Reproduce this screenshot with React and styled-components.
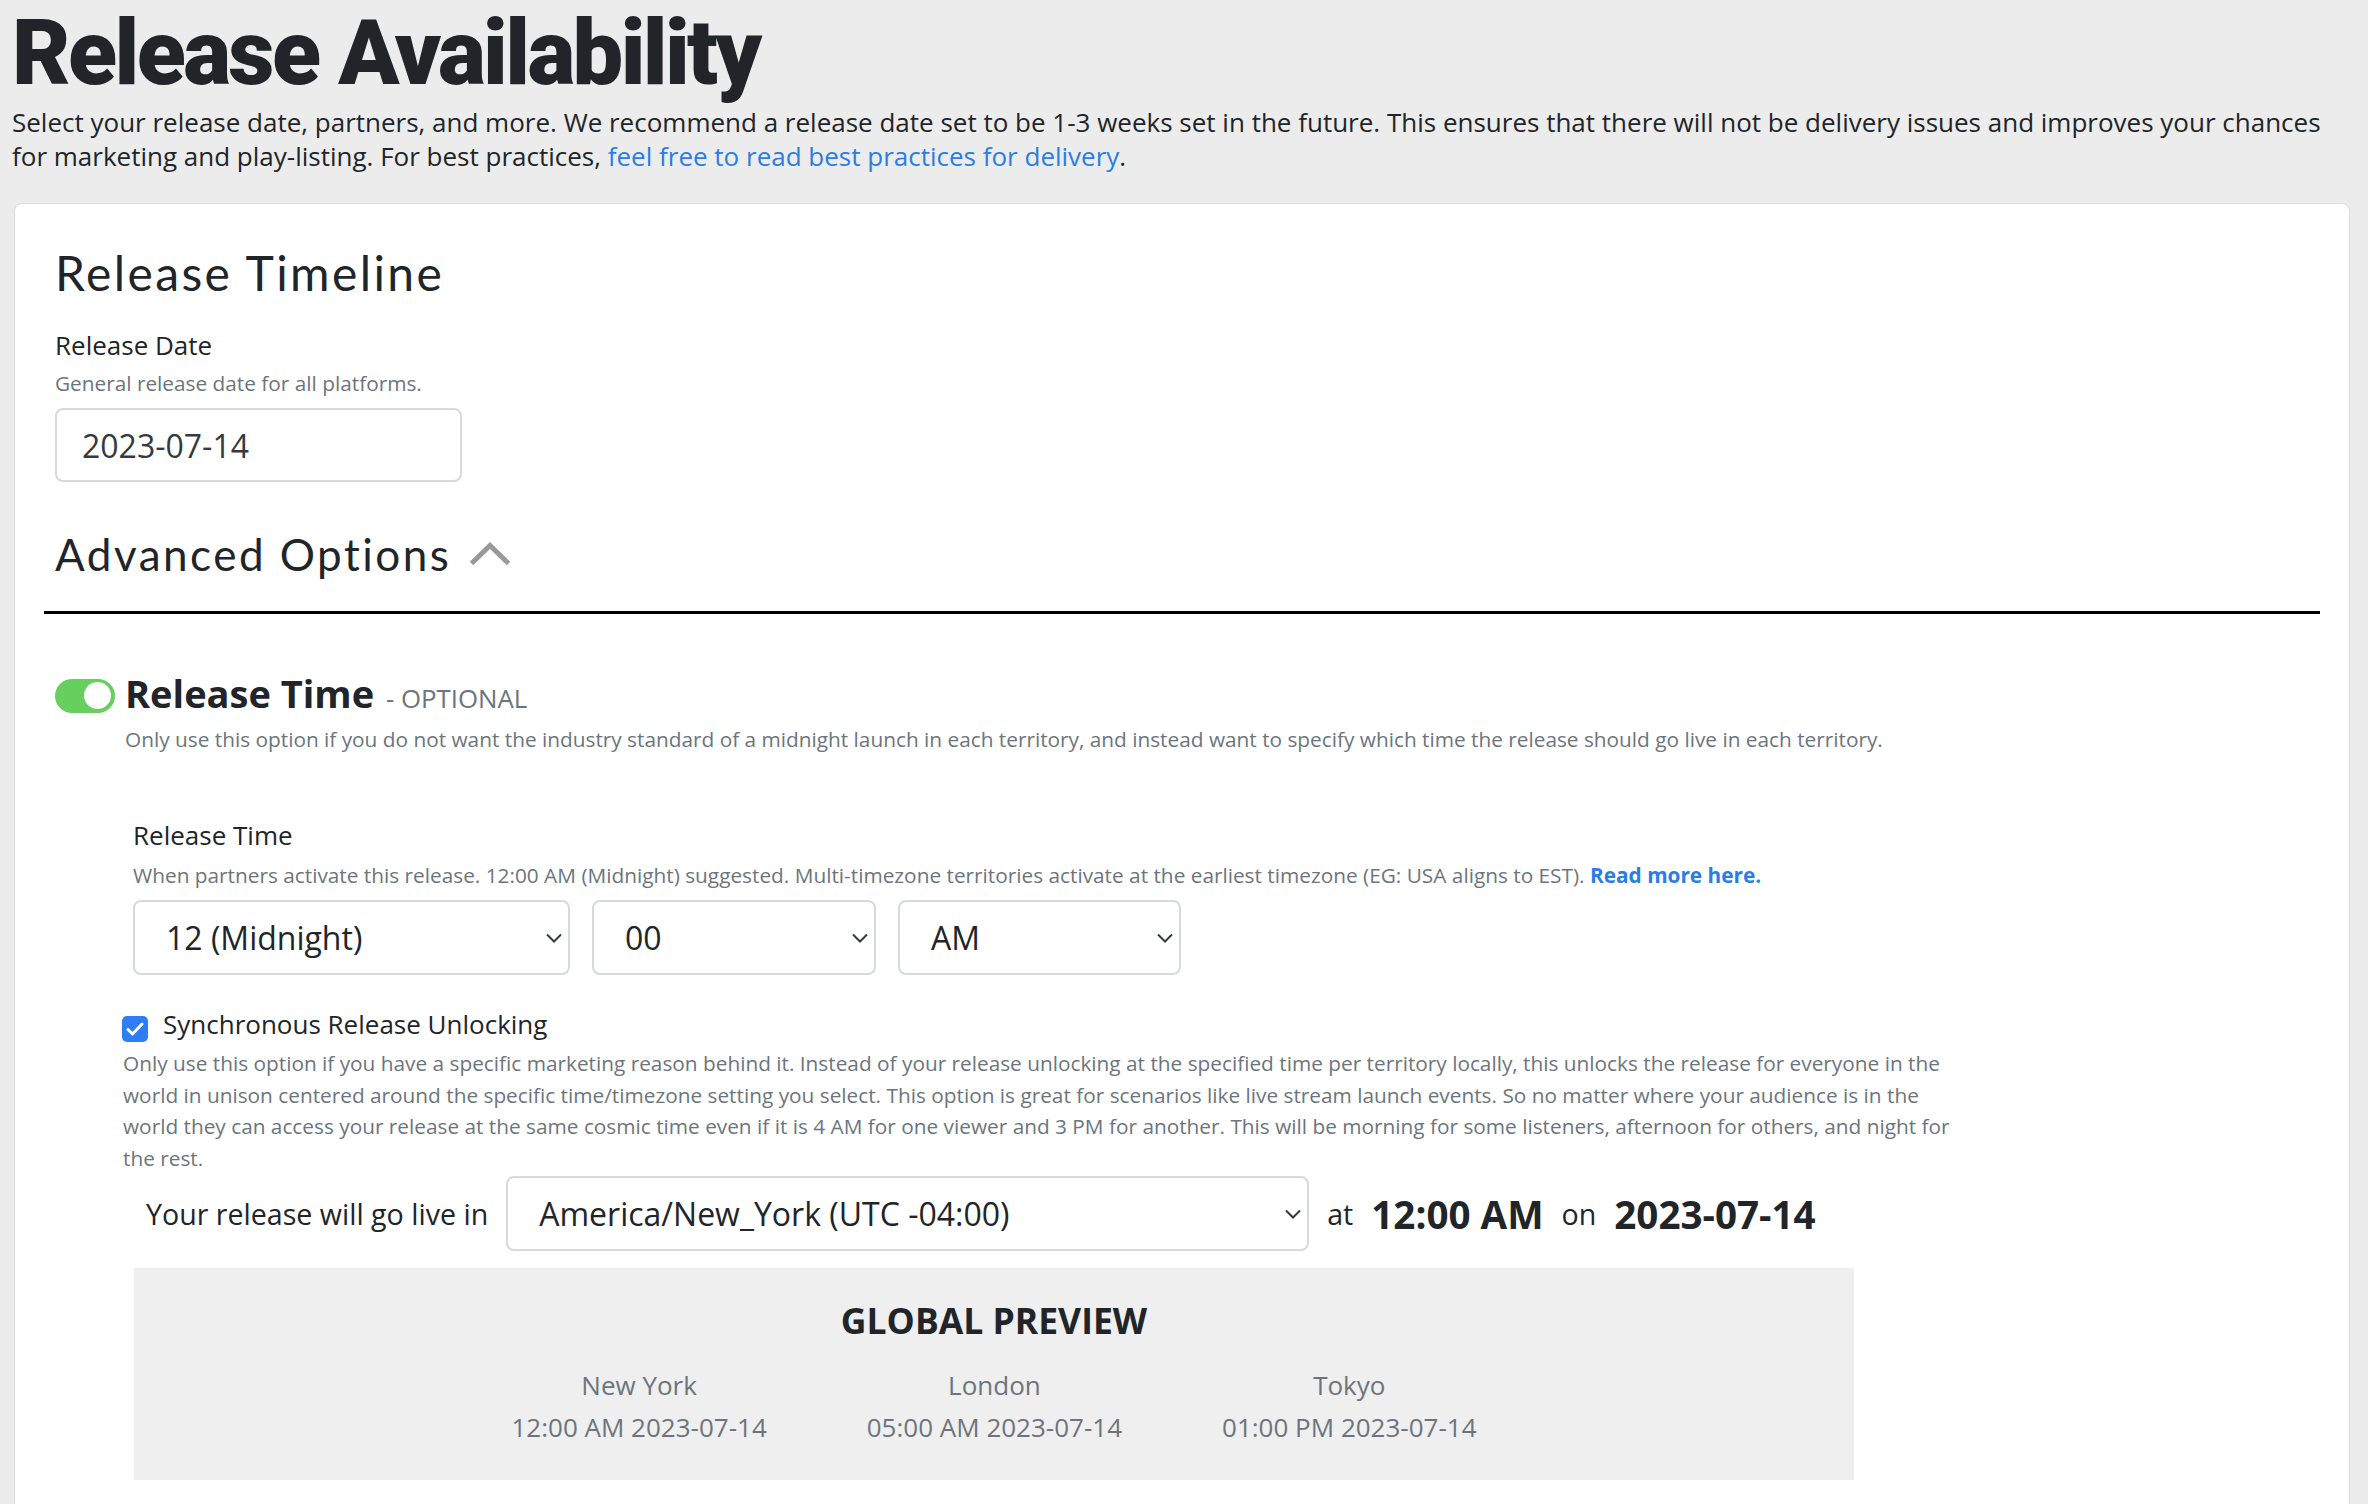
import React, { useState } from "react";
import styled, { createGlobalStyle } from "styled-components";

const GlobalStyle = createGlobalStyle`
  html, body {
    margin: 0;
    padding: 0;
    background: #ececec;
  }
  body {
    font-family: "Open Sans", "Liberation Sans", sans-serif;
    color: #212529;
  }
  * {
    box-sizing: border-box;
  }
`;

const cities = [
  { name: "New York", time: "12:00 AM 2023-07-14" },
  { name: "London", time: "05:00 AM 2023-07-14" },
  { name: "Tokyo", time: "01:00 PM 2023-07-14" },
];

function Chevron() {
  return (
    <svg width="16" height="10" viewBox="0 0 16 10" fill="none">
      <path d="M1 1.5 L8 8.5 L15 1.5" stroke="#343a40" strokeWidth="2" />
    </svg>
  );
}

function Dropdown({ value, options, width }) {
  return (
    <SelectWrap $width={width}>
      <Select defaultValue={value}>
        {options.map((o) => (
          <option key={o}>{o}</option>
        ))}
      </Select>
      <Arrow>
        <Chevron />
      </Arrow>
    </SelectWrap>
  );
}

export default function App() {
  const [timeEnabled, setTimeEnabled] = useState(true);
  const [sync, setSync] = useState(true);

  return (
    <Page>
      <GlobalStyle />
      <PageTitle>Release Availability</PageTitle>
      <Intro>
        Select your release date, partners, and more. We recommend a release
        date set to be 1-3 weeks set in the future. This ensures that there will
        not be delivery issues and improves your chances for marketing and
        play-listing. For best practices,{" "}
        <a href="#">feel free to read best practices for delivery</a>.
      </Intro>

      <Card>
        <Section>
          <SectionTitle>Release Timeline</SectionTitle>
          <Label>Release Date</Label>
          <Help>General release date for all platforms.</Help>
          <DateInput defaultValue="2023-07-14" />

          <AdvancedHeader>
            <AdvancedTitle>Advanced Options</AdvancedTitle>
            <svg width="42" height="24" viewBox="0 0 42 24" fill="none">
              <path
                d="M2.5 21.5 L21 3.5 L39.5 21.5"
                stroke="#999"
                strokeWidth="5"
              />
            </svg>
          </AdvancedHeader>
        </Section>

        <Divider />

        <Section>
          <ToggleRow>
            <Toggle
              $on={timeEnabled}
              onClick={() => setTimeEnabled(!timeEnabled)}
            >
              <Knob $on={timeEnabled} />
            </Toggle>
            <OptionTitle>
              Release Time <Optional>- OPTIONAL</Optional>
            </OptionTitle>
          </ToggleRow>
          <OptionDesc>
            Only use this option if you do not want the industry standard of a
            midnight launch in each territory, and instead want to specify which
            time the release should go live in each territory.
          </OptionDesc>

          <TimeGroup>
            <Label>Release Time</Label>
            <Help $gap={7}>
              When partners activate this release. 12:00 AM (Midnight)
              suggested. Multi-timezone territories activate at the earliest
              timezone (EG: USA aligns to EST). <a href="#">Read more here.</a>
            </Help>
            <SelectRow>
              <Dropdown
                value="12 (Midnight)"
                width={437}
                options={["12 (Midnight)", "1", "2", "3"]}
              />
              <Dropdown value="00" width={284} options={["00", "15", "30", "45"]} />
              <Dropdown value="AM" width={283} options={["AM", "PM"]} />
            </SelectRow>
          </TimeGroup>

          <CheckRow>
            <CheckBox $checked={sync} onClick={() => setSync(!sync)}>
              {sync && (
                <svg width="18" height="14" viewBox="0 0 18 14" fill="none">
                  <path
                    d="M2 7.5 L6.5 12 L16 2"
                    stroke="#fff"
                    strokeWidth="3"
                    strokeLinecap="round"
                    strokeLinejoin="round"
                  />
                </svg>
              )}
            </CheckBox>
            <CheckLabel>Synchronous Release Unlocking</CheckLabel>
          </CheckRow>
          <SyncDesc>
            Only use this option if you have a specific marketing reason behind
            it. Instead of your release unlocking at the specified time per
            territory locally, this unlocks the release for everyone in the world
            in unison centered around the specific time/timezone setting you
            select. This option is great for scenarios like live stream launch
            events. So no matter where your audience is in the world they can
            access your release at the same cosmic time even if it is 4 AM for
            one viewer and 3 PM for another. This will be morning for some
            listeners, afternoon for others, and night for the rest.
          </SyncDesc>

          <LiveRow>
            <LiveText>Your release will go live in</LiveText>
            <Dropdown
              value="America/New_York (UTC -04:00)"
              width={803}
              options={[
                "America/New_York (UTC -04:00)",
                "Europe/London (UTC +01:00)",
                "Asia/Tokyo (UTC +09:00)",
              ]}
            />
            <LiveText>at</LiveText>
            <LiveStrong>12:00 AM</LiveStrong>
            <LiveText>on</LiveText>
            <LiveStrong>2023-07-14</LiveStrong>
          </LiveRow>

          <Preview>
            <PreviewTitle>GLOBAL PREVIEW</PreviewTitle>
            <CityRow>
              {cities.map((c) => (
                <City key={c.name}>
                  <div>{c.name}</div>
                  <div>{c.time}</div>
                </City>
              ))}
            </CityRow>
          </Preview>
        </Section>
      </Card>
    </Page>
  );
}

const Page = styled.div`
  padding: 0 18px 40px 12px;
  a {
    color: #2b7de6;
    text-decoration: none;
  }
`;

const PageTitle = styled.h1`
  margin: 0;
  padding-top: 3px;
  font-family: Roboto, "Liberation Sans", sans-serif;
  font-weight: 900;
  font-size: 90px;
  line-height: 102px;
  letter-spacing: -2.6px;
  color: #212529;
`;

const Intro = styled.p`
  margin: 0;
  font-size: 26px;
  line-height: 34px;
  color: #212529;
`;

const Card = styled.div`
  margin: 30px 0 0 2px;
  background: #fff;
  border: 1px solid #dcdcdc;
  border-radius: 8px;
  padding: 40px 29px 60px;
`;

const Section = styled.div`
  padding: 0 11px;
`;

const SectionTitle = styled.h2`
  margin: 0 0 25px;
  font-family: Lato, "Liberation Sans", sans-serif;
  font-weight: 400;
  font-size: 48px;
  line-height: 57.6px;
  letter-spacing: 2.4px;
  color: #212529;
`;

const Label = styled.div`
  font-size: 26px;
  line-height: 36px;
  color: #212529;
`;

const Help = styled.div`
  margin-top: ${(p) => p.$gap ?? 5}px;
  font-size: 20.8px;
  line-height: 31.5px;
  color: #6c757d;
  a {
    font-weight: 700;
  }
`;

const DateInput = styled.input`
  display: block;
  margin-top: 9px;
  width: 407px;
  height: 74px;
  padding: 0 25px;
  border: 2px solid #d6d9dd;
  border-radius: 8px;
  font-family: "Open Sans", sans-serif;
  font-size: 32px;
  color: #343a40;
  outline: none;
`;

const AdvancedHeader = styled.div`
  display: flex;
  align-items: center;
  gap: 18px;
  margin-top: 46px;
`;

const AdvancedTitle = styled.h3`
  margin: 0;
  font-family: Lato, "Liberation Sans", sans-serif;
  font-weight: 400;
  font-size: 44px;
  line-height: 52.8px;
  letter-spacing: 2.5px;
  color: #212529;
`;

const Divider = styled.hr`
  margin: 30px 0 0;
  height: 3px;
  border: none;
  background: #000;
`;

const ToggleRow = styled.div`
  display: flex;
  align-items: center;
  gap: 10px;
  margin-top: 58px;
`;

const Toggle = styled.div`
  width: 60px;
  height: 34px;
  border-radius: 17px;
  background: ${(p) => (p.$on ? "#66cf5e" : "#ccc")};
  display: flex;
  align-items: center;
  justify-content: ${(p) => (p.$on ? "flex-end" : "flex-start")};
  padding: 0 4px;
  cursor: pointer;
`;

const Knob = styled.div`
  width: 27px;
  height: 27px;
  border-radius: 50%;
  background: #fff;
`;

const OptionTitle = styled.h4`
  margin: 0;
  font-size: 38px;
  line-height: 43.2px;
  font-weight: 700;
  color: #212529;
`;

const Optional = styled.span`
  margin-left: 2px;
  font-size: 25.8px;
  font-weight: 400;
  color: #6c757d;
`;

const OptionDesc = styled.p`
  margin: 4px 0 0 70px;
  font-size: 20.8px;
  line-height: 31.5px;
  color: #6c757d;
`;

const TimeGroup = styled.div`
  margin-top: 61px;
  padding-left: 78px;
`;

const SelectRow = styled.div`
  display: flex;
  gap: 22px;
  margin-top: 9px;
`;

const SelectWrap = styled.div`
  position: relative;
  width: ${(p) => p.$width}px;
  flex: none;
`;

const Select = styled.select`
  appearance: none;
  width: 100%;
  height: 75px;
  padding: 0 40px 0 31px;
  border: 2px solid #d6d9dd;
  border-radius: 8px;
  background: #fff;
  font-family: "Open Sans", sans-serif;
  font-size: 32px;
  color: #212529;
  outline: none;
`;

const Arrow = styled.span`
  position: absolute;
  right: 8px;
  top: 50%;
  transform: translateY(-50%);
  display: flex;
  pointer-events: none;
`;

const CheckRow = styled.div`
  display: flex;
  align-items: flex-start;
  gap: 15px;
  margin-top: 31px;
  padding-left: 67px;
`;

const CheckBox = styled.div`
  margin-top: 10px;
  width: 26px;
  height: 26px;
  border-radius: 5px;
  background: ${(p) => (p.$checked ? "#2f7df6" : "#fff")};
  border: ${(p) => (p.$checked ? "none" : "2px solid #ccc")};
  display: flex;
  align-items: center;
  justify-content: center;
  cursor: pointer;
`;

const CheckLabel = styled.label`
  font-size: 26px;
  line-height: 36px;
  color: #212529;
`;

const SyncDesc = styled.p`
  margin: 6px 0 0 68px;
  max-width: 1850px;
  font-size: 20.8px;
  line-height: 31.5px;
  color: #6c757d;
`;

const LiveRow = styled.div`
  display: flex;
  align-items: center;
  gap: 18px;
  margin-top: 2px;
  padding-left: 91px;
`;

const LiveText = styled.span`
  font-size: 28.6px;
  color: #212529;
`;

const LiveStrong = styled.span`
  font-size: 38.6px;
  font-weight: 700;
  color: #212529;
`;

const Preview = styled.div`
  margin: 17px 0 0 79px;
  width: 1720px;
  padding: 33px 0 35px;
  background: #efefef;
  text-align: center;
`;

const PreviewTitle = styled.div`
  font-size: 35.5px;
  line-height: 39.6px;
  font-weight: 700;
  color: #212529;
`;

const CityRow = styled.div`
  display: flex;
  justify-content: center;
  gap: 100px;
  margin-top: 26px;
`;

const City = styled.div`
  font-size: 26px;
  line-height: 36px;
  color: #6c757d;
  display: flex;
  flex-direction: column;
  gap: 6px;
`;
